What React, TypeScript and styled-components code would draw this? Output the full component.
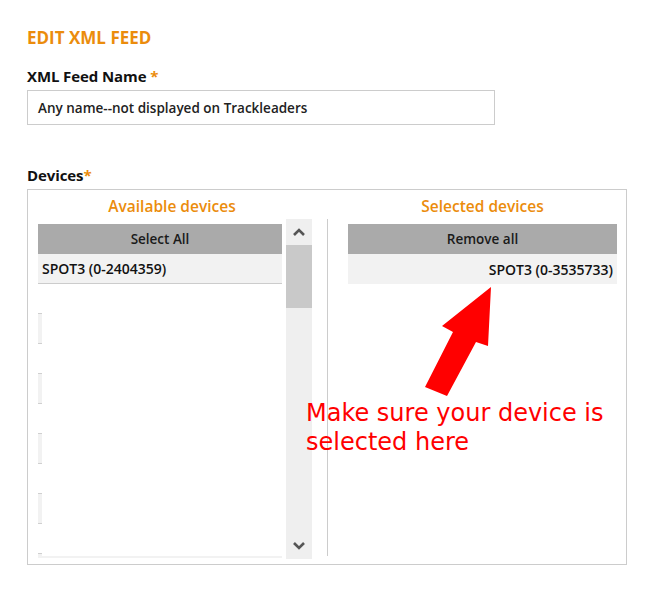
import React from "react";
import styled, { createGlobalStyle } from "styled-components";

const Global = createGlobalStyle`
  html, body { margin: 0; padding: 0; background: #fff; }
  body { font-family: "Open Sans", Lato, sans-serif; color: #111; }
  * { box-sizing: border-box; }
`;

const ORANGE = "#eb8c0c";

const Page = styled.div`
  position: relative;
  padding: 28px 27px 40px 27px;
  width: 654px;
`;

const Heading = styled.h1`
  margin: 0;
  font-size: 17px;
  font-weight: 700;
  color: ${ORANGE};
  line-height: 20px;
`;

const Label = styled.label<{ $mt: number }>`
  display: block;
  margin-top: ${(p) => p.$mt}px;
  font-size: 15px;
  font-weight: 700;
  color: #111;
  line-height: 18px;
  letter-spacing: -0.1px;
`;

const Star = styled.span`
  color: ${ORANGE};
`;

const Input = styled.div`
  margin-top: 5px;
  width: 468px;
  height: 35px;
  border: 1px solid #cccccc;
  padding: 0 10px;
  display: flex;
  align-items: center;
  font-size: 13.5px;
  font-weight: 600;
  color: #222;
`;

const DeviceBox = styled.div`
  position: relative;
  margin-top: 5px;
  width: 600px;
  height: 376px;
  border: 1px solid #cccccc;
  padding: 0 9px 4px 10px;
  display: flex;
`;

const Column = styled.div<{ $w: number }>`
  width: ${(p) => p.$w}px;
  display: flex;
  flex-direction: column;
`;

const ColTitle = styled.div<{ $w: number }>`
  width: ${(p) => p.$w}px;
  height: 29px;
  display: flex;
  align-items: center;
  justify-content: center;
  color: ${ORANGE};
  font-size: 15.5px;
  font-weight: 600;
  padding-top: 3px;
`;

const ListRow = styled.div`
  display: flex;
  height: 340px;
`;

const ListArea = styled.div<{ $w: number }>`
  width: ${(p) => p.$w}px;
  padding-top: 5px;
  overflow: hidden;
  height: 340px;
  display: flex;
  flex-direction: column;
`;

const LeftList = styled(ListArea)`
  border-bottom: 2px solid #f2f2f2;
  height: 339px;
`;

const ListHeader = styled.div`
  height: 30px;
  flex: none;
  background: #aaaaaa;
  display: flex;
  align-items: center;
  justify-content: center;
  font-size: 13.5px;
  font-weight: 600;
  color: #1a1a1a;
`;

const Item = styled.div<{ $right?: boolean; $line?: boolean }>`
  height: 30px;
  flex: none;
  background: #f2f2f2;
  display: flex;
  align-items: center;
  justify-content: ${(p) => (p.$right ? "flex-end" : "flex-start")};
  padding: ${(p) => (p.$right ? "0 4px 0 0" : "0 0 0 4px")};
  border-bottom: ${(p) => (p.$line ? "1px solid #cccccc" : "none")};
  font-size: 14px;
  font-weight: 600;
  color: #111;
`;

const Ghost = styled.div`
  flex: none;
  margin-top: 29px;
  width: 4px;
  height: 31px;
  background: #f2f2f2;
  border-top: 1px solid #d0d0d0;
  border-bottom: 1px solid #d0d0d0;
`;

const Scrollbar = styled.div`
  margin-left: 4px;
  width: 26px;
  height: 340px;
  background: #efefef;
  display: flex;
  flex-direction: column;
`;

const ScrollBtn = styled.div`
  height: 26px;
  flex: none;
  display: flex;
  align-items: center;
  justify-content: center;
`;

const Thumb = styled.div`
  height: 63px;
  background: #c9c9c9;
  flex: none;
`;

const Spacer = styled.div`
  flex: 1;
`;

const Divider = styled.div`
  margin: 29px 20px 4px 14px;
  width: 1px;
  background: #cccccc;
`;

const Note = styled.div`
  position: absolute;
  left: 306px;
  top: 399px;
  font-family: "DejaVu Sans", Verdana, sans-serif;
  font-size: 24px;
  line-height: 29px;
  color: #ff0000;
  pointer-events: none;
`;

const ArrowSvg = styled.svg`
  position: absolute;
  left: 0;
  top: 0;
  pointer-events: none;
`;

const Chevron = ({ up }: { up?: boolean }) => (
  <svg width="12" height="8" viewBox="0 0 12 8">
    <path
      d={up ? "M1 7 L6 2 L11 7" : "M1 1 L6 6 L11 1"}
      fill="none"
      stroke="#555"
      strokeWidth="2.6"
    />
  </svg>
);

export default function App() {
  return (
    <>
      <Global />
      <Page>
        <Heading>EDIT XML FEED</Heading>
        <Label $mt={19}>
          XML Feed Name <Star>*</Star>
        </Label>
        <Input>Any name--not displayed on Trackleaders</Input>
        <Label $mt={41}>
          Devices<Star>*</Star>
        </Label>
        <DeviceBox>
          <Column $w={275}>
            <ColTitle $w={268}>Available devices</ColTitle>
            <ListRow>
              <LeftList $w={244}>
                <ListHeader>Select All</ListHeader>
                <Item $line>SPOT3 (0-2404359)</Item>
                <Ghost />
                <Ghost />
                <Ghost />
                <Ghost />
                <Ghost />
              </LeftList>
              <Scrollbar>
                <ScrollBtn>
                  <Chevron up />
                </ScrollBtn>
                <Thumb />
                <Spacer />
                <ScrollBtn>
                  <Chevron />
                </ScrollBtn>
              </Scrollbar>
            </ListRow>
          </Column>
          <Divider />
          <Column $w={269}>
            <ColTitle $w={269}>Selected devices</ColTitle>
            <ListArea $w={269}>
              <ListHeader>Remove all</ListHeader>
              <Item $right>SPOT3 (0-3535733)</Item>
            </ListArea>
          </Column>
        </DeviceBox>
        <ArrowSvg width="654" height="607" viewBox="0 0 654 607">
          <polygon
            points="491,287 488,346 476,342 447,396 425,387 453,332 442,326"
            fill="#ff0000"
          />
        </ArrowSvg>
        <Note>
          Make sure your device is
          <br />
          selected here
        </Note>
      </Page>
    </>
  );
}
